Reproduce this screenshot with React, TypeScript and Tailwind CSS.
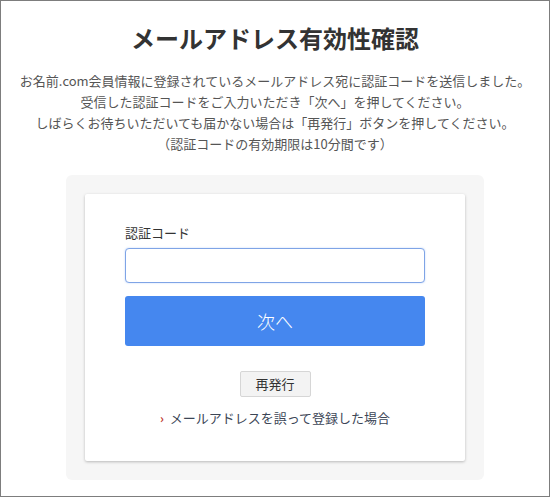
const jp = { fontFamily: '"Noto Sans CJK JP", "Noto Sans", sans-serif' };

export default function App() {
  return (
    <div
      className="box-border h-[497px] w-[550px] border border-[#7d7d7d] bg-white text-[#333]"
      style={jp}
    >
      <h1 className="pt-[21px] text-center text-[24px] leading-[32px] font-bold text-[#333]">
        メールアドレス有効性確認
      </h1>

      <div className="mt-[16px] text-center text-[13px] leading-[21px] text-[#555]">
        <p>お名前.com会員情報に登録されているメールアドレス宛に認証コードを送信しました。</p>
        <p>受信した認証コードをご入力いただき「次へ」を押してください。</p>
        <p>しばらくお待ちいただいても届かない場合は「再発行」ボタンを押してください。</p>
        <p>（認証コードの有効期限は10分間です）</p>
      </div>

      <div className="mx-auto mt-[21px] w-[418px] rounded-[6px] bg-[#f6f6f6] p-[19px]">
        <div className="rounded-[2px] bg-white px-[40px] pt-[29px] pb-[33px] shadow-[0_1px_3px_rgba(0,0,0,0.25)]">
          <label className="block text-[13px] leading-[20px] text-[#333]">認証コード</label>
          <input
            type="text"
            className="mt-[5px] box-border block h-[35px] w-full rounded-[4px] border border-[#7fa4e6] bg-white px-2 shadow-[0_0_2px_rgba(66,133,244,0.35)] outline-none"
          />
          <button
            type="button"
            className="mt-[13px] block h-[50px] w-full rounded-[3px] bg-[#4587ef] text-[18px] font-light text-white"
          >
            次へ
          </button>

          <div className="mt-[25px] flex justify-center">
            <button
              type="button"
              className="box-border h-[26px] w-[71px] rounded-[2px] border border-[#d6d6d6] bg-[#f3f3f3] text-[13px] text-[#333]"
            >
              再発行
            </button>
          </div>

          <div className="mt-[11px] flex items-center justify-center text-[13px] leading-[20px] text-[#3c4656]">
            <span className="mr-[6px] text-[12px] font-bold text-[#c0392b]">›</span>
            <a href="#" className="text-[#3c4656]">
              メールアドレスを誤って登録した場合
            </a>
          </div>
        </div>
      </div>
    </div>
  );
}
